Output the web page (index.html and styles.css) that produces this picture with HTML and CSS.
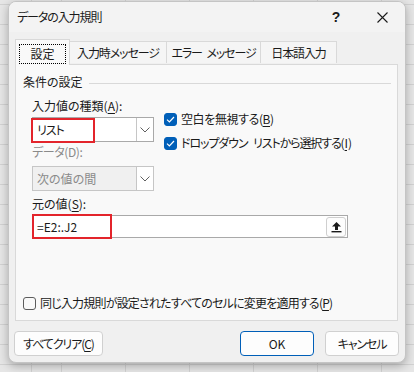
FILE: index.html
```html
<!DOCTYPE html>
<html lang="ja">
<head>
    <meta charset="UTF-8">
    <title>データの入力規則</title>
    <link rel="stylesheet" href="styles.css">
</head>
<body>
    <div class="dialog">
        <div class="titlebar">
            <span class="title tight">データの入力規則</span>
            <span class="help">?</span>
            <span class="close">
                <svg width="11" height="11" viewBox="0 0 11 11"><path d="M0.5 0.5 L10.5 10.5 M10.5 0.5 L0.5 10.5" stroke="#1a1a1a" stroke-width="1.1" fill="none"/></svg>
            </span>
        </div>

        <div class="body">
            <div class="tabs">
                <div class="tab active"><span class="focus">設定</span></div>
                <div class="tab tab-2 tight">入力時メッセージ</div>
                <div class="tab tab-3 tight">エラー メッセージ</div>
                <div class="tab tab-4 tight">日本語入力</div>
            </div>

            <div class="panel">
                <div class="group-head">
                    <span>条件の設定</span>
                    <span class="rule"></span>
                </div>

                <div class="cols">
                    <div class="left-col">
                        <div class="label">入力値の種類(<u>A</u>):</div>
                        <div class="combo">
                            <span class="combo-text tight">リスト</span>
                            <span class="combo-btn">
                                <svg width="10" height="6" viewBox="0 0 10 6"><path d="M0.5 0.5 L5 5 L9.5 0.5" stroke="#606060" stroke-width="1" fill="none"/></svg>
                            </span>
                            <span class="mark mark-type"></span>
                        </div>
                        <div class="label disabled slight">データ(D):</div>
                        <div class="combo combo-off">
                            <span class="combo-text">次の値の間</span>
                            <span class="combo-btn">
                                <svg width="10" height="6" viewBox="0 0 10 6"><path d="M0.5 0.5 L5 5 L9.5 0.5" stroke="#606060" stroke-width="1" fill="none"/></svg>
                            </span>
                        </div>
                    </div>
                    <div class="right-col">
                        <div class="check slight">
                            <span class="box on">
                                <svg width="9" height="7" viewBox="0 0 9 7"><path d="M1 3.6 L3.4 6 L8 1" stroke="#fff" stroke-width="1.2" fill="none"/></svg>
                            </span>
                            <span>空白を無視する(<u>B</u>)</span>
                        </div>
                        <div class="check">
                            <span class="box on">
                                <svg width="9" height="7" viewBox="0 0 9 7"><path d="M1 3.6 L3.4 6 L8 1" stroke="#fff" stroke-width="1.2" fill="none"/></svg>
                            </span>
                            <span class="drop-text">ドロップダウン リストから選択する(<u>I</u>)</span>
                        </div>
                    </div>
                </div>

                <div class="label source-label">元の値(<u>S</u>):</div>
                <div class="source">
                    <span class="source-text">=E2:.J2</span>
                    <span class="pick">
                        <svg width="11" height="12" viewBox="0 0 11 12"><path d="M5.5 1 L10 5.5 L7 5.5 L7 9 L4 9 L4 5.5 L1 5.5 Z" fill="#1a1a1a"/><rect x="0.5" y="10" width="10" height="1.4" fill="#1a1a1a"/></svg>
                    </span>
                    <span class="mark mark-source"></span>
                </div>

                <div class="check apply">
                    <span class="box"></span>
                    <span class="apply-text">同じ入力規則が設定されたすべてのセルに変更を適用する(<u>P</u>)</span>
                </div>
            </div>

            <div class="buttons">
                <button class="btn btn-clear tight">すべてクリア(<u>C</u>)</button>
                <span class="spacer"></span>
                <button class="btn btn-ok">OK</button>
                <button class="btn tight">キャンセル</button>
            </div>
        </div>
    </div>
</body>
</html>
```

FILE: styles.css
```css
* {
    box-sizing: border-box;
}
body {
    margin: 0;
    padding-top: 1px;
    width: 414px;
    height: 372px;
    overflow: hidden;
    font-family: "Noto Sans CJK JP", "Noto Sans", sans-serif;
    font-size: 12px;
    font-feature-settings: "palt";
    color: #1a1a1a;
    background-color: #e6e6e6;
    background-image:
        repeating-linear-gradient(to right, #d2d2d2 0 1px, transparent 1px 64px),
        repeating-linear-gradient(to bottom, #d2d2d2 0 1px, transparent 1px 20px);
    background-position: 61px 4px;
}
u {
    text-decoration-thickness: 1px;
    text-underline-offset: 2px;
}
.tight {
    letter-spacing: -1.1px;
}
.slight {
    letter-spacing: -0.4px;
}
.dialog {
    margin-left: 8px;
    width: 398px;
    height: 362px;
    background: #f0f0f0;
    border: 1px solid #c4c4c4;
    border-radius: 8px;
    box-shadow: 0 3px 10px rgba(0, 0, 0, 0.28);
    overflow: hidden;
}
.titlebar {
    display: flex;
    align-items: center;
    height: 30px;
    background: #f3f3f3;
    padding-left: 8px;
}
.title {
    flex: 1;
    line-height: 16px;
}
.help {
    width: 46px;
    text-align: center;
    font-size: 14px;
    font-weight: bold;
    font-family: "Liberation Sans", sans-serif;
}
.close {
    width: 46px;
    display: flex;
    justify-content: center;
    align-items: center;
}
.body {
    padding: 7px 0 0 6px;
}
.tabs {
    display: flex;
    align-items: flex-end;
    height: 25px;
    position: relative;
    z-index: 1;
}
.tab {
    display: flex;
    align-items: center;
    justify-content: center;
    height: 22px;
    margin-bottom: 1px;
    background: #f5f5f5;
    border: 1px solid #d9d9d9;
    border-bottom: none;
    margin-left: -1px;
    line-height: 16px;
}
.tab.active {
    margin-left: 0;
    width: 55px;
    height: 26px;
    margin-bottom: -1px;
    background: #f9f9f9;
    z-index: 2;
}
.tab-2 {
    width: 98px;
}
.tab-3 {
    width: 95px;
    word-spacing: 3px;
}
.tab-4 {
    width: 77px;
}
.focus {
    display: flex;
    align-items: center;
    justify-content: center;
    width: 47px;
    height: 20px;
    border: 1px dotted #000;
    margin-top: 2px;
}
.panel {
    display: flex;
    flex-direction: column;
    width: 383px;
    height: 257px;
    background: #f9f9f9;
    border: 1px solid #d9d9d9;
    padding: 9px 0 9px 0;
}
.group-head {
    display: flex;
    align-items: center;
    gap: 6px;
    height: 16px;
    padding: 0 6px 0 7px;
    line-height: 16px;
}
.rule {
    flex: 1;
    height: 1px;
    background: #d9d9d9;
    margin-top: 3px;
}
.cols {
    display: flex;
    gap: 10px;
}
.left-col {
    padding-left: 16px;
}
.label {
    height: 16px;
    line-height: 16px;
    margin-top: 8px;
}
.label.disabled {
    color: #8a8a8a;
    margin-top: 2px;
}
.combo {
    position: relative;
    display: flex;
    width: 122px;
    height: 25px;
    margin-top: 3px;
    background: #fff;
    border: 1px solid #a9a9a9;
}
.combo-off {
    margin-top: 6px;
    background: #f0f0f0;
    border-color: #c6c6c6;
    color: #8a8a8a;
}
.combo-text {
    flex: 1;
    padding-left: 4px;
    line-height: 23px;
}
.combo-btn {
    display: flex;
    align-items: center;
    justify-content: center;
    width: 17px;
    background: #fff;
    border-left: 1px solid #c6c6c6;
}
.mark {
    position: absolute;
    border: 2px solid #e3242b;
}
.mark-type {
    left: -2px;
    top: 0;
    width: 64px;
    height: 25px;
}
.right-col {
    display: flex;
    flex-direction: column;
    gap: 8px;
    padding-top: 21px;
}
.check {
    display: flex;
    align-items: center;
    gap: 4px;
    height: 16px;
    line-height: 16px;
}
.drop-text {
    letter-spacing: -1.1px;
    word-spacing: 4px;
}
.drop-text u {
    padding-left: 1px;
    padding-right: 1px;
}
.box {
    display: flex;
    align-items: center;
    justify-content: center;
    width: 13px;
    height: 13px;
    border-radius: 3px;
    border: 1px solid #5c5c5c;
    background: #f9f9f9;
}
.box.on {
    background: #005fb8;
    border-color: #005fb8;
}
.source-label {
    margin-left: 16px;
    margin-top: 5px;
}
.source {
    position: relative;
    display: flex;
    align-items: center;
    margin: 3px 0 0 16px;
    width: 316px;
    height: 23px;
    background: #fff;
    border: 1px solid #a9a9a9;
}
.source-text {
    flex: 1;
    padding-left: 4px;
    line-height: 21px;
}
.pick {
    display: flex;
    align-items: center;
    justify-content: center;
    width: 20px;
    height: 20px;
    margin-right: 1px;
    border: 1px solid #cfcfcf;
    border-radius: 3px;
    background: #fdfdfd;
}
.mark-source {
    left: -1px;
    top: -2px;
    width: 80px;
    height: 25px;
}
.apply {
    margin-top: auto;
    padding-left: 7px;
}
.apply-text {
    letter-spacing: -0.8px;
}
.buttons {
    display: flex;
    gap: 11px;
    margin-top: 10px;
    margin-left: -1px;
    width: 385px;
}
.spacer {
    flex: 1;
}
.btn {
    height: 25px;
    width: 74px;
    padding: 0;
    font: inherit;
    color: #1a1a1a;
    background: #fdfdfd;
    border: 1px solid #d0d0d0;
    border-radius: 4px;
}
.btn-clear {
    width: 89px;
}
.btn-ok {
    border-color: #005fb8;
}
```
